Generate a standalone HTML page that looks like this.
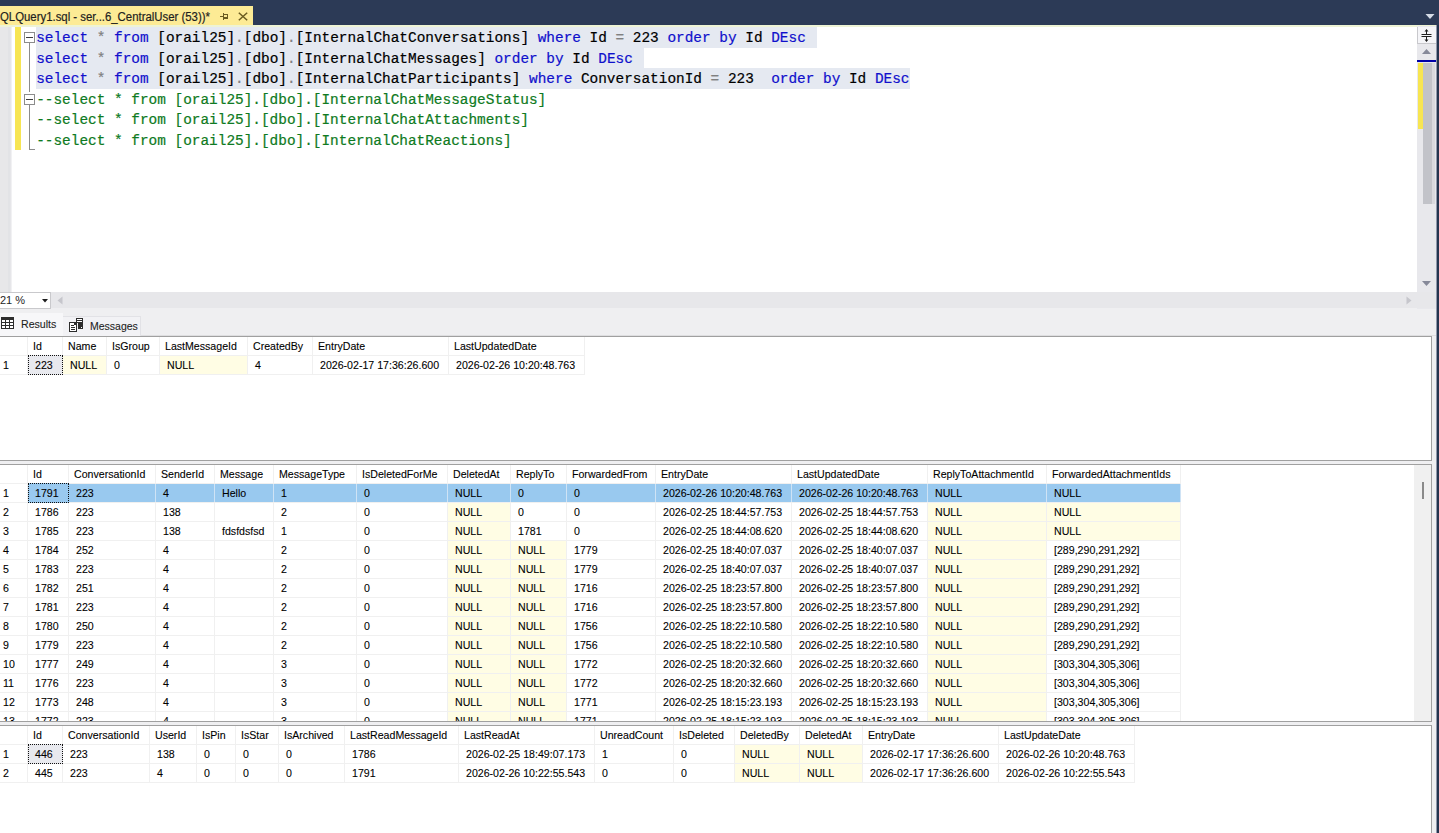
<!DOCTYPE html><html><head><meta charset="utf-8"><style>
*{margin:0;padding:0;box-sizing:border-box}
html,body{width:1439px;height:833px;overflow:hidden;background:#2c3a56}
body{position:relative;font-family:"Liberation Sans",sans-serif}
.a{position:absolute}
.code{position:absolute;font-family:"Liberation Mono",monospace;font-size:14.42px;white-space:pre;line-height:20.6px;height:20.6px;-webkit-text-stroke:0.2px currentColor}
.k{color:#1010cc}.g{color:#808080}.c{color:#0e7a22}.t{color:#000}
.gt{position:absolute;font-size:11.5px;white-space:pre;color:#000;line-height:12px;transform-origin:0 0;transform:scaleX(0.922);-webkit-text-stroke:0.1px #000}
.vl{position:absolute;width:1px;background:#f0f0f0}
.hl{position:absolute;height:1px;background:#f0f0f0}
</style></head><body>
<div class="a" style="left:0;top:6px;width:253px;height:19px;background:#fdeb95"></div>
<div class="a" style="left:0;top:10.1px;font-size:12px;line-height:14px;color:#1e1e1e;white-space:pre;-webkit-text-stroke:0.2px #1e1e1e;transform-origin:0 0;transform:scaleX(0.948)">QLQuery1.sql - ser...6_CentralUser (53))*</div>
<svg class="a" style="left:220px;top:13px" width="8" height="7" viewBox="0 0 8 7" shape-rendering="crispEdges"><g fill="#6a5c20"><rect x="0" y="3" width="3" height="1"/><rect x="3" y="0" width="1" height="7"/><rect x="3" y="1" width="5" height="1"/><rect x="7" y="1" width="1" height="5"/><rect x="3" y="4" width="5" height="2"/></g></svg>
<svg class="a" style="left:238px;top:12px" width="10" height="9" viewBox="0 0 10 9"><path d="M0.8 0.8L9.2 8.2M9.2 0.8L0.8 8.2" stroke="#6a5c20" stroke-width="1.5"/></svg>
<svg class="a" style="left:1425px;top:13px" width="10" height="7" viewBox="0 0 10 7"><path d="M0.5 1H9.5L5 6Z" fill="#d5dbe6"/></svg>
<div class="a" style="left:0;top:25px;width:1436px;height:808px;background:#efeff1"></div>
<div class="a" style="left:0;top:335px;width:1436px;height:1px;background:#dedee0"></div>
<div class="a" style="left:0;top:25px;width:1436px;height:2px;background:#eef3d5"></div>
<div class="a" style="left:0;top:27px;width:1417px;height:265px;background:#fff"></div>
<div class="a" style="left:0;top:27px;width:8px;height:265px;background:#e7e7e9"></div>
<div class="a" style="left:8px;top:27px;width:2px;height:265px;background:#e2e3e6"></div>
<div class="a" style="left:10px;top:27px;width:1px;height:265px;background:#e6e6e9"></div>
<div class="a" style="left:11px;top:27px;width:1px;height:265px;background:#f1f1f3"></div>
<div class="a" style="left:14.5px;top:27px;width:6px;height:122.5px;background:#f7e552"></div>
<div class="a" style="left:24px;top:32px;width:11px;height:11px;border:1px solid #8c8c8c;background:#fff"></div>
<div class="a" style="left:26px;top:37px;width:7px;height:1px;background:#3c3c3c"></div>
<div class="a" style="left:29px;top:43px;width:1px;height:49px;background:#8c8c8c"></div>
<div class="a" style="left:24px;top:94px;width:11px;height:11px;border:1px solid #8c8c8c;background:#fff"></div>
<div class="a" style="left:26px;top:99px;width:7px;height:1px;background:#3c3c3c"></div>
<div class="a" style="left:29px;top:105px;width:1px;height:45px;background:#8c8c8c"></div>
<div class="a" style="left:29px;top:149px;width:6px;height:1px;background:#8c8c8c"></div>
<div class="a" style="left:36px;top:27.20px;width:780.6px;height:21.0px;background:#e5e9f1"></div>
<div class="a" style="left:36px;top:47.80px;width:608.0px;height:21.0px;background:#e5e9f1"></div>
<div class="a" style="left:36px;top:68.40px;width:873.8px;height:21.0px;background:#e5e9f1"></div>
<div class="code" style="left:36.2px;top:28.00px"><span class="k">select</span><span class="t"> </span><span class="g">*</span><span class="t"> </span><span class="k">from</span><span class="t"> [orail25]</span><span class="g">.</span><span class="t">[dbo]</span><span class="g">.</span><span class="t">[InternalChatConversations] </span><span class="k">where</span><span class="t"> Id </span><span class="g">=</span><span class="t"> 223 </span><span class="k">order</span><span class="t"> </span><span class="k">by</span><span class="t"> Id </span><span class="k">DEsc</span></div>
<div class="code" style="left:36.2px;top:48.60px"><span class="k">select</span><span class="t"> </span><span class="g">*</span><span class="t"> </span><span class="k">from</span><span class="t"> [orail25]</span><span class="g">.</span><span class="t">[dbo]</span><span class="g">.</span><span class="t">[InternalChatMessages] </span><span class="k">order</span><span class="t"> </span><span class="k">by</span><span class="t"> Id </span><span class="k">DEsc</span></div>
<div class="code" style="left:36.2px;top:69.20px"><span class="k">select</span><span class="t"> </span><span class="g">*</span><span class="t"> </span><span class="k">from</span><span class="t"> [orail25]</span><span class="g">.</span><span class="t">[dbo]</span><span class="g">.</span><span class="t">[InternalChatParticipants] </span><span class="k">where</span><span class="t"> ConversationId </span><span class="g">=</span><span class="t"> 223  </span><span class="k">order</span><span class="t"> </span><span class="k">by</span><span class="t"> Id </span><span class="k">DEsc</span></div>
<div class="code" style="left:36.2px;top:89.80px"><span class="c">--select * from [orail25].[dbo].[InternalChatMessageStatus]</span></div>
<div class="code" style="left:36.2px;top:110.40px"><span class="c">--select * from [orail25].[dbo].[InternalChatAttachments]</span></div>
<div class="code" style="left:36.2px;top:131.00px"><span class="c">--select * from [orail25].[dbo].[InternalChatReactions]</span></div>
<div class="a" style="left:1417px;top:26px;width:19px;height:283px;background:#e8e8ec"></div>
<div class="a" style="left:1417px;top:27px;width:19px;height:17px;background:#f5f5f8;border-left:1px solid #c8c8cc;border-bottom:1px solid #c8c8cc"></div>
<svg class="a" style="left:1420px;top:28px" width="13" height="15" viewBox="0 0 13 15"><path d="M6.5 3V6M6.5 9V12M1.5 6.5H11.5M1.5 8.5H11.5" stroke="#1e1e1e" stroke-width="1"/><path d="M4.5 3.5H8.5L6.5 1Z M4.5 11.5H8.5L6.5 14Z" fill="#1e1e1e"/></svg>
<svg class="a" style="left:1421px;top:48px" width="11" height="7" viewBox="0 0 11 7"><path d="M1 6H10L5.5 1Z" fill="#868999"/></svg>
<div class="a" style="left:1417px;top:60px;width:19px;height:2px;background:#0000a8"></div>
<div class="a" style="left:1423px;top:63px;width:9px;height:141px;background:#c2c3c9"></div>
<div class="a" style="left:1432px;top:63px;width:3px;height:141px;background:#d9d9de"></div>
<div class="a" style="left:1418px;top:63px;width:5px;height:66px;background:#f7e552"></div>
<svg class="a" style="left:1421px;top:280px" width="11" height="7" viewBox="0 0 11 7"><path d="M1 1H10L5.5 6Z" fill="#868999"/></svg>
<div class="a" style="left:0;top:292px;width:1436px;height:16px;background:#e7e7ea"></div>
<div class="a" style="left:-1px;top:292px;width:52px;height:17px;background:#fff;border:1px solid #c9c9cc"></div>
<div class="a" style="left:0;top:294px;font-size:11px;line-height:13px;color:#1e1e1e;white-space:pre">21 %</div>
<svg class="a" style="left:42px;top:299px" width="6" height="4" viewBox="0 0 6 4"><path d="M0 0H6L3 3.5Z" fill="#1e1e1e"/></svg>
<svg class="a" style="left:57px;top:296px" width="6" height="9" viewBox="0 0 6 9"><path d="M5.5 0.5V8.5L0.5 4.5Z" fill="#c6c6cc"/></svg>
<svg class="a" style="left:1406px;top:296px" width="6" height="9" viewBox="0 0 6 9"><path d="M0.5 0.5V8.5L5.5 4.5Z" fill="#c6c6cc"/></svg>
<div class="a" style="left:0;top:313px;width:63px;height:23px;background:#f7f7f9"></div>
<div class="a" style="left:63px;top:316px;width:78px;height:20px;background:#f2f2f5;border-top:1px solid #e2e2e6;border-right:1px solid #e2e2e6"></div>
<svg class="a" style="left:1px;top:317px" width="13" height="12" viewBox="0 0 13 12"><rect x="0" y="0" width="13" height="12" fill="#2d2d2d"/><g fill="#fff"><rect x="1" y="3" width="3" height="2"/><rect x="5" y="3" width="3" height="2"/><rect x="9" y="3" width="3" height="2"/><rect x="1" y="6" width="3" height="2"/><rect x="5" y="6" width="3" height="2"/><rect x="9" y="6" width="3" height="2"/><rect x="1" y="9" width="3" height="2"/><rect x="5" y="9" width="3" height="2"/><rect x="9" y="9" width="3" height="2"/></g></svg>
<div class="a" style="left:21px;top:317.5px;font-size:11.5px;line-height:13px;color:#1e1e1e;white-space:pre;transform-origin:0 0;transform:scaleX(0.922);-webkit-text-stroke:0.1px #1e1e1e">Results</div>
<svg class="a" style="left:68px;top:317px" width="16" height="16" viewBox="0 0 16 16" shape-rendering="crispEdges"><rect x="8" y="1" width="7" height="5" fill="#2d2d2d"/><rect x="10" y="5" width="5" height="7" fill="#2d2d2d"/><rect x="9" y="2" width="5" height="1" fill="#fff"/><rect x="9" y="4" width="5" height="1" fill="#fff"/><rect x="13" y="10" width="1" height="1" fill="#fff"/><rect x="1" y="5" width="8" height="10" fill="#2d2d2d"/><rect x="2" y="6" width="6" height="8" fill="#fff"/><rect x="6" y="6" width="2" height="2" fill="#2d2d2d"/><rect x="3" y="8" width="3" height="1" fill="#2d2d2d"/><rect x="3" y="10" width="4" height="1" fill="#2d2d2d"/><rect x="3" y="12" width="4" height="1" fill="#2d2d2d"/></svg>
<div class="a" style="left:90px;top:319.5px;font-size:11.5px;line-height:13px;color:#1e1e1e;white-space:pre;transform-origin:0 0;transform:scaleX(0.912);-webkit-text-stroke:0.1px #1e1e1e">Messages</div>
<div class="a" style="left:0;top:336px;width:1432px;height:125px;background:#fff;overflow:hidden">
<div class="a" style="left:63px;top:20px;width:43px;height:18px;background:#fffde4"></div>
<div class="a" style="left:160px;top:20px;width:87px;height:18px;background:#fffde4"></div>
<div class="vl" style="left:27px;top:0;height:39px"></div>
<div class="vl" style="left:62px;top:0;height:39px"></div>
<div class="vl" style="left:106px;top:0;height:39px"></div>
<div class="vl" style="left:159px;top:0;height:39px"></div>
<div class="vl" style="left:247px;top:0;height:39px"></div>
<div class="vl" style="left:312px;top:0;height:39px"></div>
<div class="vl" style="left:448px;top:0;height:39px"></div>
<div class="vl" style="left:584px;top:0;height:39px"></div>
<div class="hl" style="left:0;top:19px;width:585px"></div>
<div class="hl" style="left:0;top:38px;width:585px"></div>
<div class="a" style="left:28px;top:19px;width:35px;height:20px;background:#e8e9ee;border:1px dotted #111"></div>
<div class="gt" style="left:33px;top:4.1px">Id</div>
<div class="gt" style="left:68px;top:4.1px">Name</div>
<div class="gt" style="left:112px;top:4.1px">IsGroup</div>
<div class="gt" style="left:165px;top:4.1px">LastMessageId</div>
<div class="gt" style="left:253px;top:4.1px">CreatedBy</div>
<div class="gt" style="left:318px;top:4.1px">EntryDate</div>
<div class="gt" style="left:454px;top:4.1px">LastUpdatedDate</div>
<div class="gt" style="left:2.5px;top:23.1px">1</div>
<div class="gt" style="left:34.8px;top:23.1px">223</div>
<div class="gt" style="left:69.8px;top:23.1px">NULL</div>
<div class="gt" style="left:113.8px;top:23.1px">0</div>
<div class="gt" style="left:166.8px;top:23.1px">NULL</div>
<div class="gt" style="left:254.8px;top:23.1px">4</div>
<div class="gt" style="left:319.8px;top:23.1px">2026-02-17 17:36:26.600</div>
<div class="gt" style="left:455.8px;top:23.1px">2026-02-26 10:20:48.763</div>
<div class="a" style="left:0;top:0;width:1432px;height:1px;background:#a0a0a0"></div>
<div class="a" style="left:1431px;top:0;width:1px;height:125px;background:#a0a0a0"></div>
<div class="a" style="left:0;top:124px;width:1432px;height:1px;background:#a0a0a0"></div>
</div>
<div class="a" style="left:0;top:464px;width:1432px;height:258px;background:#fff;overflow:hidden">
<div class="a" style="left:28px;top:20px;width:40px;height:18px;background:#99c9ef"></div>
<div class="a" style="left:69px;top:20px;width:86px;height:18px;background:#99c9ef"></div>
<div class="a" style="left:156px;top:20px;width:58px;height:18px;background:#99c9ef"></div>
<div class="a" style="left:215px;top:20px;width:58px;height:18px;background:#99c9ef"></div>
<div class="a" style="left:274px;top:20px;width:82px;height:18px;background:#99c9ef"></div>
<div class="a" style="left:357px;top:20px;width:90px;height:18px;background:#99c9ef"></div>
<div class="a" style="left:448px;top:20px;width:62px;height:18px;background:#99c9ef"></div>
<div class="a" style="left:511px;top:20px;width:55px;height:18px;background:#99c9ef"></div>
<div class="a" style="left:567px;top:20px;width:88px;height:18px;background:#99c9ef"></div>
<div class="a" style="left:656px;top:20px;width:135px;height:18px;background:#99c9ef"></div>
<div class="a" style="left:792px;top:20px;width:135px;height:18px;background:#99c9ef"></div>
<div class="a" style="left:928px;top:20px;width:118px;height:18px;background:#99c9ef"></div>
<div class="a" style="left:1047px;top:20px;width:133px;height:18px;background:#99c9ef"></div>
<div class="a" style="left:448px;top:39px;width:62px;height:18px;background:#fffde4"></div>
<div class="a" style="left:928px;top:39px;width:118px;height:18px;background:#fffde4"></div>
<div class="a" style="left:1047px;top:39px;width:133px;height:18px;background:#fffde4"></div>
<div class="a" style="left:448px;top:58px;width:62px;height:18px;background:#fffde4"></div>
<div class="a" style="left:928px;top:58px;width:118px;height:18px;background:#fffde4"></div>
<div class="a" style="left:1047px;top:58px;width:133px;height:18px;background:#fffde4"></div>
<div class="a" style="left:448px;top:77px;width:62px;height:18px;background:#fffde4"></div>
<div class="a" style="left:511px;top:77px;width:55px;height:18px;background:#fffde4"></div>
<div class="a" style="left:928px;top:77px;width:118px;height:18px;background:#fffde4"></div>
<div class="a" style="left:448px;top:96px;width:62px;height:18px;background:#fffde4"></div>
<div class="a" style="left:511px;top:96px;width:55px;height:18px;background:#fffde4"></div>
<div class="a" style="left:928px;top:96px;width:118px;height:18px;background:#fffde4"></div>
<div class="a" style="left:448px;top:115px;width:62px;height:18px;background:#fffde4"></div>
<div class="a" style="left:511px;top:115px;width:55px;height:18px;background:#fffde4"></div>
<div class="a" style="left:928px;top:115px;width:118px;height:18px;background:#fffde4"></div>
<div class="a" style="left:448px;top:134px;width:62px;height:18px;background:#fffde4"></div>
<div class="a" style="left:511px;top:134px;width:55px;height:18px;background:#fffde4"></div>
<div class="a" style="left:928px;top:134px;width:118px;height:18px;background:#fffde4"></div>
<div class="a" style="left:448px;top:153px;width:62px;height:18px;background:#fffde4"></div>
<div class="a" style="left:511px;top:153px;width:55px;height:18px;background:#fffde4"></div>
<div class="a" style="left:928px;top:153px;width:118px;height:18px;background:#fffde4"></div>
<div class="a" style="left:448px;top:172px;width:62px;height:18px;background:#fffde4"></div>
<div class="a" style="left:511px;top:172px;width:55px;height:18px;background:#fffde4"></div>
<div class="a" style="left:928px;top:172px;width:118px;height:18px;background:#fffde4"></div>
<div class="a" style="left:448px;top:191px;width:62px;height:18px;background:#fffde4"></div>
<div class="a" style="left:511px;top:191px;width:55px;height:18px;background:#fffde4"></div>
<div class="a" style="left:928px;top:191px;width:118px;height:18px;background:#fffde4"></div>
<div class="a" style="left:448px;top:210px;width:62px;height:18px;background:#fffde4"></div>
<div class="a" style="left:511px;top:210px;width:55px;height:18px;background:#fffde4"></div>
<div class="a" style="left:928px;top:210px;width:118px;height:18px;background:#fffde4"></div>
<div class="a" style="left:448px;top:229px;width:62px;height:18px;background:#fffde4"></div>
<div class="a" style="left:511px;top:229px;width:55px;height:18px;background:#fffde4"></div>
<div class="a" style="left:928px;top:229px;width:118px;height:18px;background:#fffde4"></div>
<div class="a" style="left:448px;top:248px;width:62px;height:18px;background:#fffde4"></div>
<div class="a" style="left:511px;top:248px;width:55px;height:18px;background:#fffde4"></div>
<div class="a" style="left:928px;top:248px;width:118px;height:18px;background:#fffde4"></div>
<div class="vl" style="left:27px;top:0;height:267px"></div>
<div class="vl" style="left:68px;top:0;height:267px"></div>
<div class="vl" style="left:155px;top:0;height:267px"></div>
<div class="vl" style="left:214px;top:0;height:267px"></div>
<div class="vl" style="left:273px;top:0;height:267px"></div>
<div class="vl" style="left:356px;top:0;height:267px"></div>
<div class="vl" style="left:447px;top:0;height:267px"></div>
<div class="vl" style="left:510px;top:0;height:267px"></div>
<div class="vl" style="left:566px;top:0;height:267px"></div>
<div class="vl" style="left:655px;top:0;height:267px"></div>
<div class="vl" style="left:791px;top:0;height:267px"></div>
<div class="vl" style="left:927px;top:0;height:267px"></div>
<div class="vl" style="left:1046px;top:0;height:267px"></div>
<div class="vl" style="left:1180px;top:0;height:267px"></div>
<div class="hl" style="left:0;top:19px;width:1181px"></div>
<div class="hl" style="left:0;top:38px;width:1181px"></div>
<div class="hl" style="left:0;top:57px;width:1181px"></div>
<div class="hl" style="left:0;top:76px;width:1181px"></div>
<div class="hl" style="left:0;top:95px;width:1181px"></div>
<div class="hl" style="left:0;top:114px;width:1181px"></div>
<div class="hl" style="left:0;top:133px;width:1181px"></div>
<div class="hl" style="left:0;top:152px;width:1181px"></div>
<div class="hl" style="left:0;top:171px;width:1181px"></div>
<div class="hl" style="left:0;top:190px;width:1181px"></div>
<div class="hl" style="left:0;top:209px;width:1181px"></div>
<div class="hl" style="left:0;top:228px;width:1181px"></div>
<div class="hl" style="left:0;top:247px;width:1181px"></div>
<div class="hl" style="left:0;top:266px;width:1181px"></div>
<div class="a" style="left:68px;top:20px;width:1px;height:18px;background:#cfe3f5"></div>
<div class="a" style="left:155px;top:20px;width:1px;height:18px;background:#cfe3f5"></div>
<div class="a" style="left:214px;top:20px;width:1px;height:18px;background:#cfe3f5"></div>
<div class="a" style="left:273px;top:20px;width:1px;height:18px;background:#cfe3f5"></div>
<div class="a" style="left:356px;top:20px;width:1px;height:18px;background:#cfe3f5"></div>
<div class="a" style="left:447px;top:20px;width:1px;height:18px;background:#cfe3f5"></div>
<div class="a" style="left:510px;top:20px;width:1px;height:18px;background:#cfe3f5"></div>
<div class="a" style="left:566px;top:20px;width:1px;height:18px;background:#cfe3f5"></div>
<div class="a" style="left:655px;top:20px;width:1px;height:18px;background:#cfe3f5"></div>
<div class="a" style="left:791px;top:20px;width:1px;height:18px;background:#cfe3f5"></div>
<div class="a" style="left:927px;top:20px;width:1px;height:18px;background:#cfe3f5"></div>
<div class="a" style="left:1046px;top:20px;width:1px;height:18px;background:#cfe3f5"></div>
<div class="a" style="left:1180px;top:20px;width:1px;height:18px;background:#cfe3f5"></div>
<div class="a" style="left:28px;top:19px;width:41px;height:20px;background:#99c9ef;border:1px dotted #111"></div>
<div class="gt" style="left:33px;top:4.1px">Id</div>
<div class="gt" style="left:74px;top:4.1px">ConversationId</div>
<div class="gt" style="left:161px;top:4.1px">SenderId</div>
<div class="gt" style="left:220px;top:4.1px">Message</div>
<div class="gt" style="left:279px;top:4.1px">MessageType</div>
<div class="gt" style="left:362px;top:4.1px">IsDeletedForMe</div>
<div class="gt" style="left:453px;top:4.1px">DeletedAt</div>
<div class="gt" style="left:516px;top:4.1px">ReplyTo</div>
<div class="gt" style="left:572px;top:4.1px">ForwardedFrom</div>
<div class="gt" style="left:661px;top:4.1px">EntryDate</div>
<div class="gt" style="left:797px;top:4.1px">LastUpdatedDate</div>
<div class="gt" style="left:933px;top:4.1px">ReplyToAttachmentId</div>
<div class="gt" style="left:1052px;top:4.1px">ForwardedAttachmentIds</div>
<div class="gt" style="left:2.5px;top:23.1px">1</div>
<div class="gt" style="left:34.8px;top:23.1px">1791</div>
<div class="gt" style="left:75.8px;top:23.1px">223</div>
<div class="gt" style="left:162.8px;top:23.1px">4</div>
<div class="gt" style="left:221.8px;top:23.1px">Hello</div>
<div class="gt" style="left:280.8px;top:23.1px">1</div>
<div class="gt" style="left:363.8px;top:23.1px">0</div>
<div class="gt" style="left:454.8px;top:23.1px">NULL</div>
<div class="gt" style="left:517.8px;top:23.1px">0</div>
<div class="gt" style="left:573.8px;top:23.1px">0</div>
<div class="gt" style="left:662.8px;top:23.1px">2026-02-26 10:20:48.763</div>
<div class="gt" style="left:798.8px;top:23.1px">2026-02-26 10:20:48.763</div>
<div class="gt" style="left:934.8px;top:23.1px">NULL</div>
<div class="gt" style="left:1053.8px;top:23.1px">NULL</div>
<div class="gt" style="left:2.5px;top:42.1px">2</div>
<div class="gt" style="left:34.8px;top:42.1px">1786</div>
<div class="gt" style="left:75.8px;top:42.1px">223</div>
<div class="gt" style="left:162.8px;top:42.1px">138</div>
<div class="gt" style="left:280.8px;top:42.1px">2</div>
<div class="gt" style="left:363.8px;top:42.1px">0</div>
<div class="gt" style="left:454.8px;top:42.1px">NULL</div>
<div class="gt" style="left:517.8px;top:42.1px">0</div>
<div class="gt" style="left:573.8px;top:42.1px">0</div>
<div class="gt" style="left:662.8px;top:42.1px">2026-02-25 18:44:57.753</div>
<div class="gt" style="left:798.8px;top:42.1px">2026-02-25 18:44:57.753</div>
<div class="gt" style="left:934.8px;top:42.1px">NULL</div>
<div class="gt" style="left:1053.8px;top:42.1px">NULL</div>
<div class="gt" style="left:2.5px;top:61.1px">3</div>
<div class="gt" style="left:34.8px;top:61.1px">1785</div>
<div class="gt" style="left:75.8px;top:61.1px">223</div>
<div class="gt" style="left:162.8px;top:61.1px">138</div>
<div class="gt" style="left:221.8px;top:61.1px">fdsfdsfsd</div>
<div class="gt" style="left:280.8px;top:61.1px">1</div>
<div class="gt" style="left:363.8px;top:61.1px">0</div>
<div class="gt" style="left:454.8px;top:61.1px">NULL</div>
<div class="gt" style="left:517.8px;top:61.1px">1781</div>
<div class="gt" style="left:573.8px;top:61.1px">0</div>
<div class="gt" style="left:662.8px;top:61.1px">2026-02-25 18:44:08.620</div>
<div class="gt" style="left:798.8px;top:61.1px">2026-02-25 18:44:08.620</div>
<div class="gt" style="left:934.8px;top:61.1px">NULL</div>
<div class="gt" style="left:1053.8px;top:61.1px">NULL</div>
<div class="gt" style="left:2.5px;top:80.1px">4</div>
<div class="gt" style="left:34.8px;top:80.1px">1784</div>
<div class="gt" style="left:75.8px;top:80.1px">252</div>
<div class="gt" style="left:162.8px;top:80.1px">4</div>
<div class="gt" style="left:280.8px;top:80.1px">2</div>
<div class="gt" style="left:363.8px;top:80.1px">0</div>
<div class="gt" style="left:454.8px;top:80.1px">NULL</div>
<div class="gt" style="left:517.8px;top:80.1px">NULL</div>
<div class="gt" style="left:573.8px;top:80.1px">1779</div>
<div class="gt" style="left:662.8px;top:80.1px">2026-02-25 18:40:07.037</div>
<div class="gt" style="left:798.8px;top:80.1px">2026-02-25 18:40:07.037</div>
<div class="gt" style="left:934.8px;top:80.1px">NULL</div>
<div class="gt" style="left:1053.8px;top:80.1px">[289,290,291,292]</div>
<div class="gt" style="left:2.5px;top:99.1px">5</div>
<div class="gt" style="left:34.8px;top:99.1px">1783</div>
<div class="gt" style="left:75.8px;top:99.1px">223</div>
<div class="gt" style="left:162.8px;top:99.1px">4</div>
<div class="gt" style="left:280.8px;top:99.1px">2</div>
<div class="gt" style="left:363.8px;top:99.1px">0</div>
<div class="gt" style="left:454.8px;top:99.1px">NULL</div>
<div class="gt" style="left:517.8px;top:99.1px">NULL</div>
<div class="gt" style="left:573.8px;top:99.1px">1779</div>
<div class="gt" style="left:662.8px;top:99.1px">2026-02-25 18:40:07.037</div>
<div class="gt" style="left:798.8px;top:99.1px">2026-02-25 18:40:07.037</div>
<div class="gt" style="left:934.8px;top:99.1px">NULL</div>
<div class="gt" style="left:1053.8px;top:99.1px">[289,290,291,292]</div>
<div class="gt" style="left:2.5px;top:118.1px">6</div>
<div class="gt" style="left:34.8px;top:118.1px">1782</div>
<div class="gt" style="left:75.8px;top:118.1px">251</div>
<div class="gt" style="left:162.8px;top:118.1px">4</div>
<div class="gt" style="left:280.8px;top:118.1px">2</div>
<div class="gt" style="left:363.8px;top:118.1px">0</div>
<div class="gt" style="left:454.8px;top:118.1px">NULL</div>
<div class="gt" style="left:517.8px;top:118.1px">NULL</div>
<div class="gt" style="left:573.8px;top:118.1px">1716</div>
<div class="gt" style="left:662.8px;top:118.1px">2026-02-25 18:23:57.800</div>
<div class="gt" style="left:798.8px;top:118.1px">2026-02-25 18:23:57.800</div>
<div class="gt" style="left:934.8px;top:118.1px">NULL</div>
<div class="gt" style="left:1053.8px;top:118.1px">[289,290,291,292]</div>
<div class="gt" style="left:2.5px;top:137.1px">7</div>
<div class="gt" style="left:34.8px;top:137.1px">1781</div>
<div class="gt" style="left:75.8px;top:137.1px">223</div>
<div class="gt" style="left:162.8px;top:137.1px">4</div>
<div class="gt" style="left:280.8px;top:137.1px">2</div>
<div class="gt" style="left:363.8px;top:137.1px">0</div>
<div class="gt" style="left:454.8px;top:137.1px">NULL</div>
<div class="gt" style="left:517.8px;top:137.1px">NULL</div>
<div class="gt" style="left:573.8px;top:137.1px">1716</div>
<div class="gt" style="left:662.8px;top:137.1px">2026-02-25 18:23:57.800</div>
<div class="gt" style="left:798.8px;top:137.1px">2026-02-25 18:23:57.800</div>
<div class="gt" style="left:934.8px;top:137.1px">NULL</div>
<div class="gt" style="left:1053.8px;top:137.1px">[289,290,291,292]</div>
<div class="gt" style="left:2.5px;top:156.1px">8</div>
<div class="gt" style="left:34.8px;top:156.1px">1780</div>
<div class="gt" style="left:75.8px;top:156.1px">250</div>
<div class="gt" style="left:162.8px;top:156.1px">4</div>
<div class="gt" style="left:280.8px;top:156.1px">2</div>
<div class="gt" style="left:363.8px;top:156.1px">0</div>
<div class="gt" style="left:454.8px;top:156.1px">NULL</div>
<div class="gt" style="left:517.8px;top:156.1px">NULL</div>
<div class="gt" style="left:573.8px;top:156.1px">1756</div>
<div class="gt" style="left:662.8px;top:156.1px">2026-02-25 18:22:10.580</div>
<div class="gt" style="left:798.8px;top:156.1px">2026-02-25 18:22:10.580</div>
<div class="gt" style="left:934.8px;top:156.1px">NULL</div>
<div class="gt" style="left:1053.8px;top:156.1px">[289,290,291,292]</div>
<div class="gt" style="left:2.5px;top:175.1px">9</div>
<div class="gt" style="left:34.8px;top:175.1px">1779</div>
<div class="gt" style="left:75.8px;top:175.1px">223</div>
<div class="gt" style="left:162.8px;top:175.1px">4</div>
<div class="gt" style="left:280.8px;top:175.1px">2</div>
<div class="gt" style="left:363.8px;top:175.1px">0</div>
<div class="gt" style="left:454.8px;top:175.1px">NULL</div>
<div class="gt" style="left:517.8px;top:175.1px">NULL</div>
<div class="gt" style="left:573.8px;top:175.1px">1756</div>
<div class="gt" style="left:662.8px;top:175.1px">2026-02-25 18:22:10.580</div>
<div class="gt" style="left:798.8px;top:175.1px">2026-02-25 18:22:10.580</div>
<div class="gt" style="left:934.8px;top:175.1px">NULL</div>
<div class="gt" style="left:1053.8px;top:175.1px">[289,290,291,292]</div>
<div class="gt" style="left:2.5px;top:194.1px">10</div>
<div class="gt" style="left:34.8px;top:194.1px">1777</div>
<div class="gt" style="left:75.8px;top:194.1px">249</div>
<div class="gt" style="left:162.8px;top:194.1px">4</div>
<div class="gt" style="left:280.8px;top:194.1px">3</div>
<div class="gt" style="left:363.8px;top:194.1px">0</div>
<div class="gt" style="left:454.8px;top:194.1px">NULL</div>
<div class="gt" style="left:517.8px;top:194.1px">NULL</div>
<div class="gt" style="left:573.8px;top:194.1px">1772</div>
<div class="gt" style="left:662.8px;top:194.1px">2026-02-25 18:20:32.660</div>
<div class="gt" style="left:798.8px;top:194.1px">2026-02-25 18:20:32.660</div>
<div class="gt" style="left:934.8px;top:194.1px">NULL</div>
<div class="gt" style="left:1053.8px;top:194.1px">[303,304,305,306]</div>
<div class="gt" style="left:2.5px;top:213.1px">11</div>
<div class="gt" style="left:34.8px;top:213.1px">1776</div>
<div class="gt" style="left:75.8px;top:213.1px">223</div>
<div class="gt" style="left:162.8px;top:213.1px">4</div>
<div class="gt" style="left:280.8px;top:213.1px">3</div>
<div class="gt" style="left:363.8px;top:213.1px">0</div>
<div class="gt" style="left:454.8px;top:213.1px">NULL</div>
<div class="gt" style="left:517.8px;top:213.1px">NULL</div>
<div class="gt" style="left:573.8px;top:213.1px">1772</div>
<div class="gt" style="left:662.8px;top:213.1px">2026-02-25 18:20:32.660</div>
<div class="gt" style="left:798.8px;top:213.1px">2026-02-25 18:20:32.660</div>
<div class="gt" style="left:934.8px;top:213.1px">NULL</div>
<div class="gt" style="left:1053.8px;top:213.1px">[303,304,305,306]</div>
<div class="gt" style="left:2.5px;top:232.1px">12</div>
<div class="gt" style="left:34.8px;top:232.1px">1773</div>
<div class="gt" style="left:75.8px;top:232.1px">248</div>
<div class="gt" style="left:162.8px;top:232.1px">4</div>
<div class="gt" style="left:280.8px;top:232.1px">3</div>
<div class="gt" style="left:363.8px;top:232.1px">0</div>
<div class="gt" style="left:454.8px;top:232.1px">NULL</div>
<div class="gt" style="left:517.8px;top:232.1px">NULL</div>
<div class="gt" style="left:573.8px;top:232.1px">1771</div>
<div class="gt" style="left:662.8px;top:232.1px">2026-02-25 18:15:23.193</div>
<div class="gt" style="left:798.8px;top:232.1px">2026-02-25 18:15:23.193</div>
<div class="gt" style="left:934.8px;top:232.1px">NULL</div>
<div class="gt" style="left:1053.8px;top:232.1px">[303,304,305,306]</div>
<div class="gt" style="left:2.5px;top:251.1px">13</div>
<div class="gt" style="left:34.8px;top:251.1px">1772</div>
<div class="gt" style="left:75.8px;top:251.1px">223</div>
<div class="gt" style="left:162.8px;top:251.1px">4</div>
<div class="gt" style="left:280.8px;top:251.1px">3</div>
<div class="gt" style="left:363.8px;top:251.1px">0</div>
<div class="gt" style="left:454.8px;top:251.1px">NULL</div>
<div class="gt" style="left:517.8px;top:251.1px">NULL</div>
<div class="gt" style="left:573.8px;top:251.1px">1771</div>
<div class="gt" style="left:662.8px;top:251.1px">2026-02-25 18:15:23.193</div>
<div class="gt" style="left:798.8px;top:251.1px">2026-02-25 18:15:23.193</div>
<div class="gt" style="left:934.8px;top:251.1px">NULL</div>
<div class="gt" style="left:1053.8px;top:251.1px">[303,304,305,306]</div>
<div class="a" style="left:0;top:0;width:1432px;height:1px;background:#a0a0a0"></div>
<div class="a" style="left:1431px;top:0;width:1px;height:258px;background:#a0a0a0"></div>
<div class="a" style="left:0;top:257px;width:1432px;height:1px;background:#a0a0a0"></div>
<div class="a" style="left:1414px;top:1px;width:17px;height:256px;background:#f0f0f0"></div>
<div class="a" style="left:1422px;top:18px;width:2px;height:17px;background:#8a8a8a"></div>
</div>
<div class="a" style="left:0;top:725px;width:1432px;height:108px;background:#fff;overflow:hidden">
<div class="a" style="left:735px;top:20px;width:64px;height:18px;background:#fffde4"></div>
<div class="a" style="left:800px;top:20px;width:62px;height:18px;background:#fffde4"></div>
<div class="a" style="left:735px;top:39px;width:64px;height:18px;background:#fffde4"></div>
<div class="a" style="left:800px;top:39px;width:62px;height:18px;background:#fffde4"></div>
<div class="vl" style="left:27px;top:0;height:58px"></div>
<div class="vl" style="left:62px;top:0;height:58px"></div>
<div class="vl" style="left:149px;top:0;height:58px"></div>
<div class="vl" style="left:196px;top:0;height:58px"></div>
<div class="vl" style="left:235px;top:0;height:58px"></div>
<div class="vl" style="left:278px;top:0;height:58px"></div>
<div class="vl" style="left:344px;top:0;height:58px"></div>
<div class="vl" style="left:458px;top:0;height:58px"></div>
<div class="vl" style="left:594px;top:0;height:58px"></div>
<div class="vl" style="left:673px;top:0;height:58px"></div>
<div class="vl" style="left:734px;top:0;height:58px"></div>
<div class="vl" style="left:799px;top:0;height:58px"></div>
<div class="vl" style="left:862px;top:0;height:58px"></div>
<div class="vl" style="left:998px;top:0;height:58px"></div>
<div class="vl" style="left:1134px;top:0;height:58px"></div>
<div class="hl" style="left:0;top:19px;width:1135px"></div>
<div class="hl" style="left:0;top:38px;width:1135px"></div>
<div class="hl" style="left:0;top:57px;width:1135px"></div>
<div class="a" style="left:28px;top:19px;width:35px;height:20px;background:#e8e9ee;border:1px dotted #111"></div>
<div class="gt" style="left:33px;top:4.1px">Id</div>
<div class="gt" style="left:68px;top:4.1px">ConversationId</div>
<div class="gt" style="left:155px;top:4.1px">UserId</div>
<div class="gt" style="left:202px;top:4.1px">IsPin</div>
<div class="gt" style="left:241px;top:4.1px">IsStar</div>
<div class="gt" style="left:284px;top:4.1px">IsArchived</div>
<div class="gt" style="left:350px;top:4.1px">LastReadMessageId</div>
<div class="gt" style="left:464px;top:4.1px">LastReadAt</div>
<div class="gt" style="left:600px;top:4.1px">UnreadCount</div>
<div class="gt" style="left:679px;top:4.1px">IsDeleted</div>
<div class="gt" style="left:740px;top:4.1px">DeletedBy</div>
<div class="gt" style="left:805px;top:4.1px">DeletedAt</div>
<div class="gt" style="left:868px;top:4.1px">EntryDate</div>
<div class="gt" style="left:1004px;top:4.1px">LastUpdateDate</div>
<div class="gt" style="left:2.5px;top:23.1px">1</div>
<div class="gt" style="left:34.8px;top:23.1px">446</div>
<div class="gt" style="left:69.8px;top:23.1px">223</div>
<div class="gt" style="left:156.8px;top:23.1px">138</div>
<div class="gt" style="left:203.8px;top:23.1px">0</div>
<div class="gt" style="left:242.8px;top:23.1px">0</div>
<div class="gt" style="left:285.8px;top:23.1px">0</div>
<div class="gt" style="left:351.8px;top:23.1px">1786</div>
<div class="gt" style="left:465.8px;top:23.1px">2026-02-25 18:49:07.173</div>
<div class="gt" style="left:601.8px;top:23.1px">1</div>
<div class="gt" style="left:680.8px;top:23.1px">0</div>
<div class="gt" style="left:741.8px;top:23.1px">NULL</div>
<div class="gt" style="left:806.8px;top:23.1px">NULL</div>
<div class="gt" style="left:869.8px;top:23.1px">2026-02-17 17:36:26.600</div>
<div class="gt" style="left:1005.8px;top:23.1px">2026-02-26 10:20:48.763</div>
<div class="gt" style="left:2.5px;top:42.1px">2</div>
<div class="gt" style="left:34.8px;top:42.1px">445</div>
<div class="gt" style="left:69.8px;top:42.1px">223</div>
<div class="gt" style="left:156.8px;top:42.1px">4</div>
<div class="gt" style="left:203.8px;top:42.1px">0</div>
<div class="gt" style="left:242.8px;top:42.1px">0</div>
<div class="gt" style="left:285.8px;top:42.1px">0</div>
<div class="gt" style="left:351.8px;top:42.1px">1791</div>
<div class="gt" style="left:465.8px;top:42.1px">2026-02-26 10:22:55.543</div>
<div class="gt" style="left:601.8px;top:42.1px">0</div>
<div class="gt" style="left:680.8px;top:42.1px">0</div>
<div class="gt" style="left:741.8px;top:42.1px">NULL</div>
<div class="gt" style="left:806.8px;top:42.1px">NULL</div>
<div class="gt" style="left:869.8px;top:42.1px">2026-02-17 17:36:26.600</div>
<div class="gt" style="left:1005.8px;top:42.1px">2026-02-26 10:22:55.543</div>
<div class="a" style="left:0;top:0;width:1432px;height:1px;background:#a0a0a0"></div>
<div class="a" style="left:1431px;top:0;width:1px;height:108px;background:#a0a0a0"></div>
</div>
<div class="a" style="left:1436px;top:25px;width:1px;height:808px;background:#8f98ab"></div>
<div class="a" style="left:1437px;top:25px;width:2px;height:808px;background:#24344e"></div>
</body></html>
